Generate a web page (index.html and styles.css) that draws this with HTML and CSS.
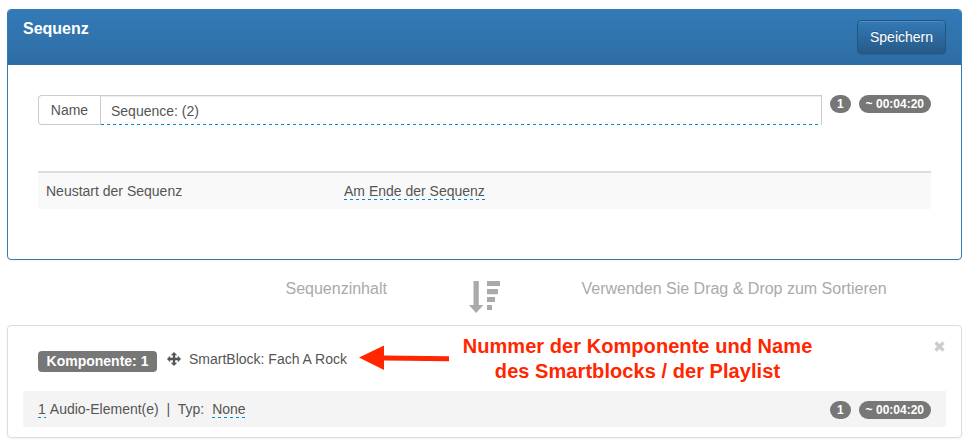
FILE: index.html
```html
<!DOCTYPE html>
<html lang="de">
<head>
<meta charset="utf-8">
<title>Sequenz</title>
<link rel="stylesheet" href="styles.css">
</head>
<body>
<section class="panel panel-primary">
  <header class="panel-heading">
    <h1 class="title">Sequenz</h1>
    <button class="save" type="button">Speichern</button>
  </header>
  <div class="panel-body">
    <div class="name-row">
      <div class="addon">Name</div>
      <div class="field">Sequence: (2)</div>
      <div class="badges"><span class="badge">1</span><span class="badge">~ 00:04:20</span></div>
    </div>
    <div class="option-row">
      <span class="option-label">Neustart der Sequenz</span>
      <span><span class="editable">Am Ende der Sequenz</span></span>
    </div>
  </div>
</section>
<div class="sort-hint">
  <span class="hint-left">Sequenzinhalt</span>
  <svg class="sort-icon" width="32" height="34" viewBox="0 0 32 34"><path d="M4.500 1h5.300v24h4.600L7.100 33 0 25h4.500zM18 1h13v5H18zM18 9h11v5.300H18zM18 17h8v5h-8zM18 25h5v5h-5z" fill="#aaa"/></svg>
  <span class="hint-right">Verwenden Sie Drag &amp; Drop zum Sortieren</span>
</div>
<section class="panel component">
  <div class="component-head">
    <span class="label">Komponente: 1</span>
    <svg class="move-icon" width="14" height="14" viewBox="0 0 14 14"><path d="M7 0l3.200 3.200H8.200v2.600h2.600v-2L14 7l-3.200 3.200v-2H8.200v2.600h2L7 14l-3.200-3.200h2V8.200H3.200v2L0 7l3.200-3.200v2h2.600V3.200h-2z" fill="#555"/></svg>
    <span class="block-name">SmartBlock: Fach A Rock</span>
    <svg class="arrow" width="92" height="26" viewBox="0 0 92 26"><path d="M0 12.500L25 .5v10l65 .8v5l-65-.8v9.500z" fill="#ff2600"/></svg>
    <div class="note"><span>Nummer der Komponente und Name</span><br><span>des Smartblocks / der Playlist</span></div>
    <svg class="close" width="11" height="11" viewBox="0 0 11 11"><path d="M1.500 1.500l8 8m0-8l-8 8" stroke="#ccc" stroke-width="3.200"/></svg>
  </div>
  <footer class="component-foot">
    <div class="meta"><span class="editable">1</span><span class="count-text">Audio-Element(e) &nbsp;|&nbsp; Typ:</span><span class="editable">None</span></div>
    <div class="badges"><span class="badge">1</span><span class="badge">~ 00:04:20</span></div>
  </footer>
</section>
</body>
</html>
```
FILE: styles.css
```css
* { box-sizing: border-box; }
body {
  margin: 0;
  padding: 9px 7px 0;
  height: 447px;
  overflow: hidden;
  background: #fff;
  color: #555;
  font: 14px/20px "Liberation Sans", Arial, sans-serif;
}
svg { display: block; flex: none; }
.panel {
  border: 1px solid #ddd;
  border-radius: 4px;
  box-shadow: 0 1px 2px rgba(0, 0, 0, .05);
}
.panel-primary { height: 251px; border-color: #337ab7; }
.panel-heading {
  display: flex;
  justify-content: space-between;
  align-items: flex-start;
  height: 55px;
  padding: 10px 15px;
  border-radius: 3px 3px 0 0;
  background: linear-gradient(#337ab7, #2e6da4);
  color: #fff;
}
.title { margin: -2px 0 0; font-size: 16px; line-height: 22px; }
.save {
  width: 89px;
  height: 34px;
  padding: 0;
  border: 1px solid #245580;
  border-radius: 4px;
  background: linear-gradient(#337ab7, #265a88);
  box-shadow: inset 0 1px 0 rgba(255, 255, 255, .15), 0 1px 1px rgba(0, 0, 0, .075);
  color: #fff;
  font: inherit;
  text-shadow: 0 -1px 0 rgba(0, 0, 0, .2);
}
.panel-body { padding: 30px; }
.name-row { display: flex; height: 30px; }
.addon {
  width: 62px;
  border: 1px solid #ccc;
  border-right: 0;
  border-radius: 4px 0 0 4px;
  line-height: 28px;
  text-align: center;
}
.field {
  flex: 1;
  padding: 1px 10px 0;
  border: solid #ccc;
  border-width: 1px 1px 0;
  background: repeating-linear-gradient(90deg, #08c 0 3px, transparent 3px 6px) 0 100% / 100% 1px no-repeat;
  box-shadow: inset 0 1px 1px rgba(0, 0, 0, .075);
  line-height: 29px;
}
.badges { display: flex; gap: 8px; margin-left: 8px; }
.badge {
  height: 18px;
  padding: 0 7px;
  border-radius: 9px;
  background: #777;
  color: #fff;
  font-size: 12px;
  font-weight: bold;
  line-height: 18px;
  white-space: nowrap;
}
.option-row {
  display: grid;
  grid-template-columns: 298px 1fr;
  height: 38px;
  margin-top: 46px;
  padding: 8px;
  border-top: 2px solid #ddd;
  background: #f9f9f9;
}
.editable {
  padding-bottom: 1px;
  background: repeating-linear-gradient(90deg, #08c 0 3px, transparent 3px 6px) 0 100% / 100% 1px no-repeat;
}
.sort-hint {
  display: flex;
  height: 65px;
  padding: 19px 0 0 278.5px;
  color: #aaa;
  font-size: 16px;
}
.hint-left { width: 183.5px; }
.sort-icon { margin-top: 1px; }
.hint-right { margin-left: 80.5px; }
.component { height: 113px; padding: 0 15px; }
.component-head { display: flex; height: 65px; padding-left: 15px; }
.label {
  width: 119px;
  height: 21px;
  margin: 25px 10px 0 0;
  border-radius: 4px;
  background: #777;
  color: #fff;
  font-weight: bold;
  line-height: 20px;
  text-align: center;
}
.move-icon { margin: 26px 8px 0 0; }
.block-name { width: 170px; margin-top: 23px; white-space: nowrap; }
.arrow { margin-top: 19px; }
.note {
  width: 373px;
  margin-top: 8px;
  color: #ff2600;
  font-size: 20px;
  font-weight: bold;
  letter-spacing: .06px;
  line-height: 25px;
  text-align: center;
  white-space: nowrap;
}
.close { margin: 15px 1px 0 auto; }
.component-foot {
  display: flex;
  justify-content: space-between;
  height: 36px;
  padding: 8px 15px;
  border-radius: 0 0 3px 3px;
  background: #f4f4f4;
}
.count-text { margin: 0 8px 0 4px; }
.component-foot .badges { margin-top: 2px; }
```
